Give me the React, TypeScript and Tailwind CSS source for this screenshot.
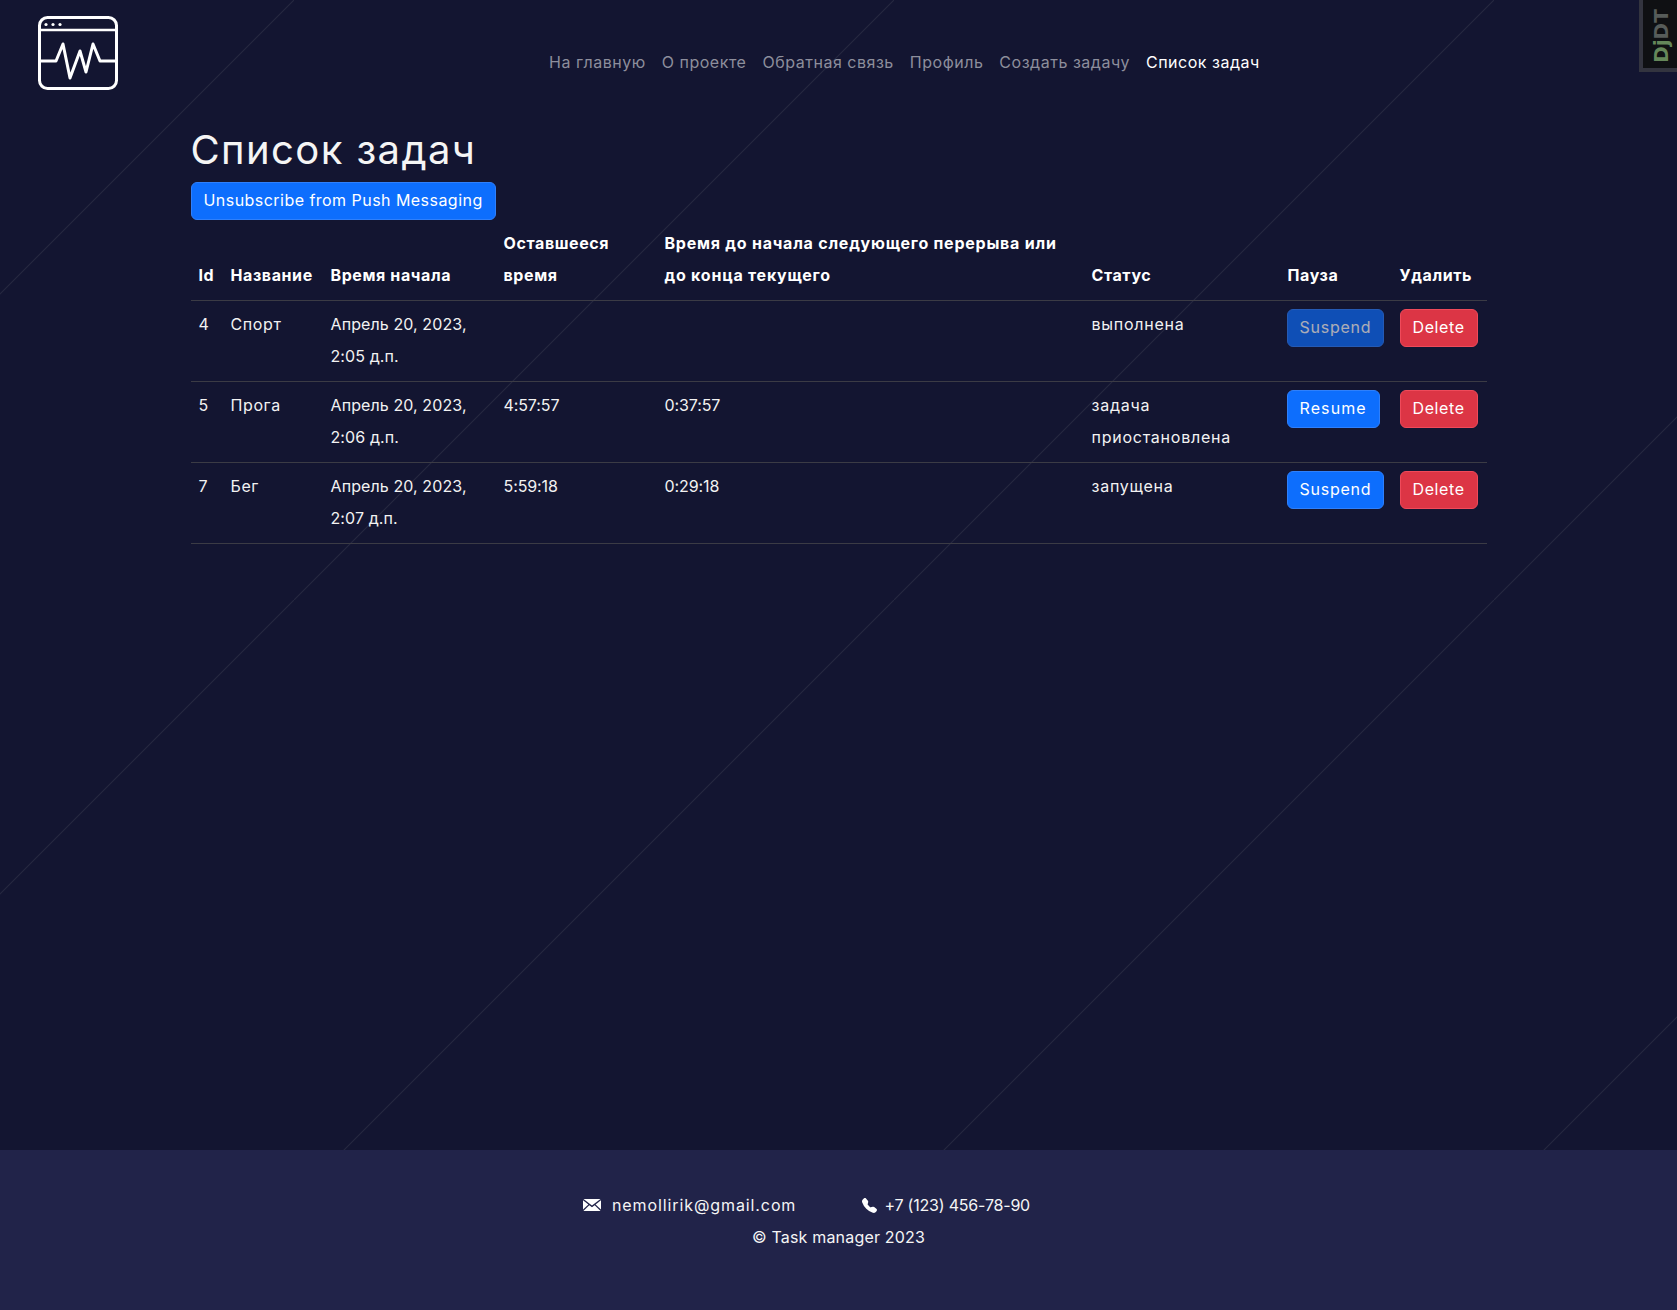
import React from 'react';
import { BsTelephoneFill } from 'react-icons/bs';

const navLinks = ['На главную', 'О проекте', 'Обратная связь', 'Профиль', 'Создать задачу', 'Список задач'];

const tasks = [
  { id: 4, name: 'Спорт', time: ['Апрель 20, 2023,', '2:05 д.п.'], left: '', next: '', status: 'выполнена', action: 'Suspend', off: true },
  { id: 5, name: 'Прога', time: ['Апрель 20, 2023,', '2:06 д.п.'], left: '4:57:57', next: '0:37:57', status: 'задача приостановлена', action: 'Resume', off: false },
  { id: 7, name: 'Бег', time: ['Апрель 20, 2023,', '2:07 д.п.'], left: '5:59:18', next: '0:29:18', status: 'запущена', action: 'Suspend', off: false },
];

const Logo = () => (
  <svg width="84" height="78" viewBox="36 14 84 78" fill="none" stroke="white" strokeWidth="3" strokeLinejoin="round" strokeLinecap="round">
    <rect x="39.5" y="17.5" width="77" height="71" rx="8" />
    <path d="M40 30h76" strokeWidth="2.5" />
    <path d="M41 61h15l7-17 7 34 10-27 6 21 7-28 7 17h15" />
    <circle cx="46" cy="24.5" r="1.6" fill="white" stroke="none" />
    <circle cx="53" cy="24.5" r="1.6" fill="white" stroke="none" />
    <circle cx="60" cy="24.5" r="1.6" fill="white" stroke="none" />
  </svg>
);

const MailIcon = () => (
  <svg width="18" height="12" viewBox="0 0 18 12" fill="white">
    <path d="M0.5 0h17L9 6.6z" />
    <path d="M0 1.2v9.4L5.4 5.4z" />
    <path d="M18 1.2v9.4L12.6 5.4z" />
    <path d="M6.3 6.2L9 8.3l2.7-2.1L17.6 12H0.4z" />
  </svg>
);

const App: React.FC = () => {
  return (
    <div className="relative flex min-h-[1310px] flex-col overflow-hidden bg-[#131531] font-['Inter','Noto_Sans',sans-serif] text-base tracking-[0.42px] text-[#f2f2f2]">
      <main className="flex-1 bg-[linear-gradient(135deg,transparent_calc(50%-1px),#25273f_50%,transparent_calc(50%+1px))] bg-[length:600px_600px] bg-[position:294px_0]">
        <header className="flex h-[126px] items-start">
          <div className="ml-[36px] mt-[14px]">
            <Logo />
          </div>
          <nav className="ml-[421px] mt-[50px] flex leading-6 tracking-[0.52px]">
            {navLinks.map((link, i) => (
              <a key={link} className={`px-2 ${i === 5 ? 'text-white' : 'text-[#8d8e9c]'}`}>
                {link}
              </a>
            ))}
          </nav>
        </header>

        <div className="mx-auto w-[1296px]">
          <h1 className="mb-2 text-[40px] leading-[48px] font-normal tracking-[1.4px] text-[#f5f5f5]">Список задач</h1>
          <button className="block h-[38px] rounded-md border border-[#2f80fb] bg-[#0d6efd] px-3 pb-[2px] tracking-[0.46px] text-white">
            Unsubscribe from Push Messaging
          </button>

          <table className="w-full table-fixed border-collapse leading-8">
            <thead>
              <tr className="border-b border-[#3b3b45] align-bottom font-bold tracking-[0.6px] text-white">
                <th className="w-[32px] px-2 pt-[7px] pb-[9px] text-left">Id</th>
                <th className="w-[100px] px-2 pt-[7px] pb-[9px] text-left">Название</th>
                <th className="w-[173px] px-2 pt-[7px] pb-[9px] text-left">Время начала</th>
                <th className="w-[161px] px-2 pt-[7px] pb-[9px] text-left">Оставшееся время</th>
                <th className="w-[427px] px-2 pt-[7px] pb-[9px] text-left tracking-[0.77px]">
                  Время до начала следующего перерыва или
                  <br />
                  до конца текущего
                </th>
                <th className="w-[196px] px-2 pt-[7px] pb-[9px] text-left">Статус</th>
                <th className="w-[112px] px-2 pt-[7px] pb-[9px] text-left">Пауза</th>
                <th className="px-2 pt-[7px] pb-[9px] text-left">Удалить</th>
              </tr>
            </thead>
            <tbody>
              {tasks.map(task => (
                <tr key={task.id} className="h-[81px] border-b border-[#3b3b45] align-top">
                  <td className="px-2 pt-[7px] pb-[9px]">{task.id}</td>
                  <td className="px-2 pt-[7px] pb-[9px] tracking-[0.6px]">{task.name}</td>
                  <td className="px-2 pt-[7px] pb-[9px] tracking-[0.1px]">
                    {task.time[0]}
                    <br />
                    {task.time[1]}
                  </td>
                  <td className="px-2 pt-[7px] pb-[9px] tracking-[-0.1px]">{task.left}</td>
                  <td className="px-2 pt-[7px] pb-[9px] tracking-[-0.1px]">{task.next}</td>
                  <td className="px-2 pt-[7px] pb-[9px] tracking-[0.75px]">{task.status}</td>
                  <td className="py-2 pr-2 pl-[7px]">
                    <button className={`h-[38px] rounded-md border border-[#2f80fb] bg-[#0d6efd] px-3 pb-[2px] leading-6 text-white ${task.action === 'Resume' ? 'tracking-[1.1px]' : 'tracking-[0.75px]'} ${task.off ? 'opacity-65' : ''}`}>
                      {task.action}
                    </button>
                  </td>
                  <td className="p-2">
                    <button className="h-[38px] rounded-md border border-[#ef4a5a] bg-[#dc3545] px-3 pb-[2px] leading-6 tracking-[0.6px] text-white">Delete</button>
                  </td>
                </tr>
              ))}
            </tbody>
          </table>
        </div>
      </main>

      <footer className="flex h-[160px] flex-col items-center bg-[#212349] pt-[39px] leading-8 text-[#f5f5f5]">
        <div className="ml-[583px] flex w-[447px] items-center self-start">
          <MailIcon />
          <span className="ml-[11px] w-[251px] tracking-[0.9px]">nemollirik@gmail.com</span>
          <BsTelephoneFill className="text-[15px] text-white" />
          <span className="ml-[7px] tracking-[-0.2px] whitespace-nowrap">+7 (123) 456-78-90</span>
        </div>
        <div className="tracking-[0.18px]">© Task manager 2023</div>
      </footer>

      <div className="absolute right-0 top-0 flex h-[72px] w-[38px] items-center justify-center border-4 border-t-0 border-r-0 border-[#33343f] bg-[#0f1013]">
        <span className="translate-x-[1px] translate-y-[2px] -rotate-90 font-['DejaVu_Sans',sans-serif] text-[20px] font-bold tracking-normal whitespace-nowrap text-[#575c5a]">
          <span className="text-[#65875a]">Dj</span>DT
        </span>
      </div>
    </div>
  );
};

export default App;
